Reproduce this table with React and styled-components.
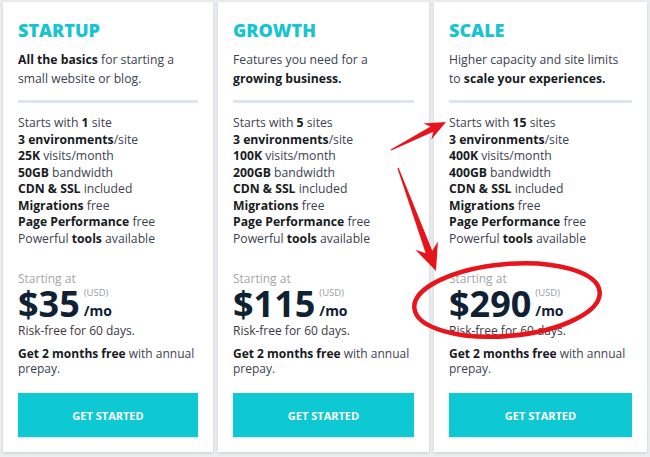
import React from "react";
import styled, { createGlobalStyle } from "styled-components";

const GlobalStyle = createGlobalStyle`
    html, body {
        margin: 0;
        padding: 0;
        background: #eceef1;
        font-family: "Open Sans", "Liberation Sans", sans-serif;
    }
`;

const Page = styled.div`
    position: relative;
    box-sizing: border-box;
    width: 650px;
    height: 457px;
    padding: 2px 2px 5px 3px;
    display: grid;
    grid-template-columns: 210px 211px 213px;
    column-gap: 5px;
`;

const Card = styled.div`
    background: #fff;
    box-shadow: 0 1px 3px rgba(40, 50, 70, 0.18);
    padding: 16px 15px 15px;
    display: flex;
    flex-direction: column;
`;

const Title = styled.h2`
    margin: 0;
    font-size: 18px;
    line-height: 24px;
    font-weight: 800;
    color: #17c4cf;
`;

const Desc = styled.p`
    margin: 8px 0 0;
    font-size: 12.2px;
    line-height: 19px;
    color: #3c4250;
    b { color: #171b22; }
`;

const Divider = styled.hr`
    margin: 12px 0 0;
    border: 0;
    height: 3px;
    background: #dfe5ee;
`;

const Features = styled.ul`
    list-style: none;
    margin: 12px 0 0;
    padding: 0;
`;

const Feature = styled.li`
    font-size: 12.2px;
    line-height: 16.5px;
    color: #3c4250;
    white-space: nowrap;
    b { color: #171b22; }
`;

const StartingAt = styled.div`
    margin-top: 24px;
    font-size: 12px;
    line-height: 15px;
    color: #a3a6ab;
`;

const PriceRow = styled.div`
    display: flex;
    align-items: flex-end;
    gap: 4px;
`;

const Amount = styled.span`
    font-size: 36px;
    line-height: 35px;
    font-weight: 700;
    color: #0f2233;
`;

const Side = styled.span`
    display: flex;
    flex-direction: column;
    padding-bottom: 3px;
`;

const Usd = styled.span`
    font-size: 9.5px;
    line-height: 12px;
    color: #9a9ca1;
    margin-bottom: 5px;
`;

const Per = styled.span`
    font-size: 14px;
    line-height: 14px;
    font-weight: 700;
    color: #0f2233;
`;

const Note = styled.div`
    margin-top: 2px;
    font-size: 12px;
    line-height: 16px;
    color: #3b3744;
`;

const Promo = styled.div`
    margin-top: 7px;
    font-size: 12px;
    line-height: 15px;
    color: #3c4250;
    b { color: #171b22; }
`;

const Button = styled.button`
    margin-top: auto;
    height: 44px;
    border: 0;
    background: #0ec8d4;
    color: #fff;
    font-family: inherit;
    font-size: 11px;
    font-weight: 700;
    box-shadow: 0 1px 2px rgba(0, 0, 0, 0.15);
    cursor: pointer;
`;

const Overlay = styled.svg`
    position: absolute;
    left: 0;
    top: 0;
    pointer-events: none;
`;

const plans = [
    {
        name: "STARTUP",
        desc: <><b>All the basics</b> for starting a small website or blog.</>,
        sites: <>Starts with <b>1</b> site</>,
        visits: "25K",
        bandwidth: "50GB",
        price: "$35",
    },
    {
        name: "GROWTH",
        desc: <>Features you need for a <b>growing business.</b></>,
        sites: <>Starts with <b>5</b> sites</>,
        visits: "100K",
        bandwidth: "200GB",
        price: "$115",
    },
    {
        name: "SCALE",
        desc: <>Higher capacity and site limits to <b>scale your experiences.</b></>,
        sites: <>Starts with <b>15</b> sites</>,
        visits: "400K",
        bandwidth: "400GB",
        price: "$290",
    },
];

// tapered arrow polygon from tail to tip
const arrow = (tx, ty, px, py, headLen, headHalf, shaftW) => {
    const dx = px - tx;
    const dy = py - ty;
    const len = Math.hypot(dx, dy);
    const ux = dx / len;
    const uy = dy / len;
    const nx = -uy;
    const ny = ux;
    const bx = px - ux * headLen;
    const by = py - uy * headLen;
    const nb = bx + ux * headLen * 0.25;
    const nby = by + uy * headLen * 0.25;
    const pts = [
        [tx + nx * 0.6, ty + ny * 0.6],
        [nb + nx * shaftW, nby + ny * shaftW],
        [bx + nx * headHalf, by + ny * headHalf],
        [px, py],
        [bx - nx * headHalf, by - ny * headHalf],
        [nb - nx * shaftW, nby - ny * shaftW],
        [tx - nx * 0.6, ty - ny * 0.6],
    ];
    return pts.map(p => p.map(v => v.toFixed(1)).join(",")).join(" ");
};

const Annotations = () => (
    <Overlay width="650" height="457" viewBox="0 0 650 457">
        <polygon points={arrow(391, 150, 446, 122, 21, 9, 3)} fill="#e8141b" />
        <polygon points={arrow(398, 168, 436, 271, 27, 12, 3.5)} fill="#e8141b" />
        <ellipse
            cx="507"
            cy="300"
            rx="93"
            ry="36"
            fill="none"
            stroke="#e8141b"
            strokeWidth="4.5"
            transform="rotate(-5 507 300)"
        />
    </Overlay>
);

const App = () => {
    return (
        <Page>
            <GlobalStyle />
            {plans.map(p => (
                <Card key={p.name}>
                    <Title>{p.name}</Title>
                    <Desc>{p.desc}</Desc>
                    <Divider />
                    <Features>
                        <Feature>{p.sites}</Feature>
                        <Feature><b>3 environments</b>/site</Feature>
                        <Feature><b>{p.visits}</b> visits/month</Feature>
                        <Feature><b>{p.bandwidth}</b> bandwidth</Feature>
                        <Feature><b>CDN &amp; SSL</b> included</Feature>
                        <Feature><b>Migrations</b> free</Feature>
                        <Feature><b>Page Performance</b> free</Feature>
                        <Feature>Powerful <b>tools</b> available</Feature>
                    </Features>
                    <StartingAt>Starting at</StartingAt>
                    <PriceRow>
                        <Amount>{p.price}</Amount>
                        <Side>
                            <Usd>(USD)</Usd>
                            <Per>/mo</Per>
                        </Side>
                    </PriceRow>
                    <Note>Risk-free for 60 days.</Note>
                    <Promo><b>Get 2 months free</b> with annual prepay.</Promo>
                    <Button>GET STARTED</Button>
                </Card>
            ))}
            <Annotations />
        </Page>
    );
};

export default App;
